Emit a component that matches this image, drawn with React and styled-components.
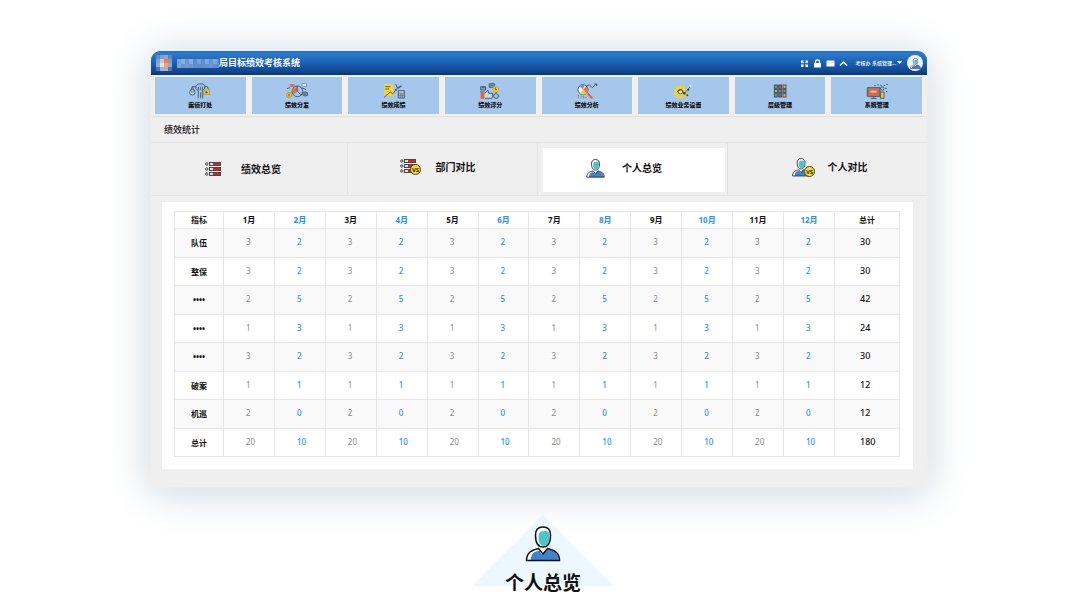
import React from "react";
import styled, { createGlobalStyle } from "styled-components";

const GlobalStyle = createGlobalStyle`
  * {
    box-sizing: border-box;
  }
  body {
    margin: 0;
    background: #fff;
    color: #111;
    font-family: "Noto Sans", "Noto Sans CJK SC", sans-serif;
  }
  button {
    border: 0;
    padding: 0;
    background: none;
    color: inherit;
    font-family: inherit;
  }
  svg {
    display: block;
  }
`;

const Page = styled.div`
  padding: 51px 140px 0 151px;
`;

const Window = styled.main`
  background: #efefef;
  border-radius: 9px 9px 11px 11px;
  overflow: hidden;
  box-shadow: 0 0 2px rgba(255, 250, 240, 0.9), 0 4px 40px 4px #d0dae1;
`;

const Header = styled.header`
  display: flex;
  align-items: center;
  height: 24px;
  padding: 0 4px 0 5px;
  background: linear-gradient(#1c6fd0 0, #2c7ad0 10%, #0e4791 85%, #06357a);
  color: #fff;
`;

const SystemTitle = styled.h1`
  flex: 1;
  margin: 0;
  font-size: 9px;
  line-height: 14px;
  font-weight: 700;
`;

const MaskWrap = styled.span`
  margin-left: 5px;
`;

const Tools = styled.div`
  display: flex;
  align-items: center;
  gap: 4px;
`;

const Tool = styled.button`
  width: 9px;
  height: 9px;
`;

const User = styled.button`
  display: flex;
  align-items: center;
  gap: 1px;
  margin: 0 1px 0 4px;
  font-size: 5px;
  line-height: 8px;
  font-weight: 500;
  white-space: nowrap;
`;

const Avatar = styled.div`
  display: flex;
  align-items: center;
  justify-content: center;
  width: 16px;
  height: 16px;
  border-radius: 50%;
  background: #eef3f7;
`;

const Modules = styled.nav`
  display: grid;
  grid-template-columns: repeat(8, 1fr);
  gap: 6px;
  padding: 2px 5px 2px 4px;
  background: #f0f0ef;
  border-bottom: 1px solid #dfdfdf;
`;

const Module = styled.button`
  display: flex;
  flex-direction: column;
  align-items: center;
  height: 37px;
  padding-top: 6px;
  background: #a5c7eb;
  box-shadow: 0 0 1px 1px #f5f3ef;
  font-size: 6px;
  line-height: 12px;
  font-weight: 900;
`;

const SectionTitle = styled.h2`
  margin: 0;
  padding: 6px 13px 5px;
  font-size: 9px;
  line-height: 14px;
  font-weight: 500;
`;

const Tabs = styled.div`
  display: grid;
  grid-template-columns: 197fr 190fr 190fr 199fr;
  height: 54px;
  border-top: 1px solid #e3e3e3;
  border-bottom: 1px solid #e3e3e3;
`;

const TabCell = styled.div`
  display: flex;
  padding: ${(p) => (p.$active ? "5px 2px 3px 5px" : "0")};
  border-right: 1px solid #e2e2e2;
  &:last-child {
    border-right: 0;
  }
`;

const Tab = styled.button`
  flex: 1;
  display: flex;
  align-items: center;
  justify-content: center;
  padding: ${(p) => p.$inset};
  background: ${(p) => (p.$active ? "#fff" : "transparent")};
  font-size: 10px;
  line-height: 15px;
  font-weight: 700;
`;

const TabIcon = styled.span`
  width: 36px;
`;

const Panel = styled.section`
  margin: 6px 14px 18px 11px;
  padding: 9px 13px 12px 12px;
  background: #fff;
`;

const Table = styled.table`
  width: 100%;
  table-layout: fixed;
  border-collapse: collapse;
  font-size: 8px;
  line-height: 12px;
`;

const LabelCol = styled.col`
  width: 49px;
`;

const TotalCol = styled.col`
  width: 65px;
`;

const HeadCell = styled.th`
  height: 17px;
  padding: 0;
  border: 1px solid #e6e6e6;
  color: ${(p) => (p.$even ? "#1e90ff" : "#111")};
  font-weight: 700;
`;

const Row = styled.tr`
  height: 28px;
  &:nth-child(odd) {
    height: 29px;
    background: #f9f9f9;
  }
`;

const RowLabel = styled.th`
  padding: 0;
  border: 1px solid #e6e6e6;
  font-weight: 700;
`;

const Cell = styled.td`
  padding: 0 0 2px 22px;
  border: 1px solid #e6e6e6;
  color: ${(p) => (p.$even ? "#1e90ff" : "#8a8a8a")};
  font-weight: ${(p) => (p.$even ? 500 : 400)};
`;

const TotalCell = styled.td`
  padding: 0 0 2px 25px;
  border: 1px solid #e6e6e6;
  font-size: 9px;
  font-weight: 500;
`;

const Caption = styled.div`
  position: relative;
  display: flex;
  flex-direction: column;
  align-items: center;
  gap: 8px;
  width: 142px;
  margin: 28px auto 0;
  padding-top: 11px;
  left: 4px;
  font-size: 19px;
  line-height: 26px;
  font-weight: 700;
  &::before {
    content: "";
    position: absolute;
    z-index: -1;
    inset: 0 0 auto;
    height: 71px;
    background: #ecf8fe;
    clip-path: polygon(50% 0, 100% 100%, 0 100%);
  }
`;

const mosaic = [
  ["#5d8cc4", "#7fa3cf", "#8da8cc", "#5b88c0"],
  ["#7ba1d0", "#d9c3ba", "#ee8244", "#7f9dc4"],
  ["#8fa9ca", "#e3e2e6", "#eba37a", "#93a8c4"],
  ["#4a76b1", "#a3b3cb", "#b3b0b9", "#5279af"],
];

const Emblem = () => (
  <svg width="16" height="18" viewBox="0 0 16 18" shapeRendering="crispEdges" aria-hidden="true">
    {mosaic.map((line, y) =>
      line.map((fill, x) => (
        <rect key={`${x}-${y}`} x={x * 4} y={y * 4 + 1} width="4" height="4" fill={fill} />
      ))
    )}
  </svg>
);

const masked = ["#8db0df", "#a3bfe4", "#7ea5d8", "#a3bfe4", "#6c98d2", "#8fb0dc", "#6f9ad2", "#9ab8df", "#7aa1d4", "#9ab8df", "#6c98d2"];

const MaskedName = () => (
  <svg width="42" height="9" viewBox="0 0 42 9" shapeRendering="crispEdges" aria-hidden="true">
    {masked.map((fill, i) => (
      <g key={i} fill={fill}>
        <rect x={i * 4} width="4" height="5" opacity=".8" />
        <rect x={i * 4} y="5" width="4" height="4" opacity={i % 2 ? 0.6 : 0.85} />
      </g>
    ))}
  </svg>
);

const PersonShape = () => (
  <>
    <path d="M2 34.500C2 27 5 24 13 22L17 28L21 22C29 24 33 27 33 34.500Z" fill="#fff" />
    <path d="M5 34C6 27 9 25 14 25L17 29L21 23C28 24 33 27 33 34Z" fill="#4083c8" />
    <path d="M1 34.500H34C34 27 30 24.500 22 22.500L17.500 28L13 22.500C5 24.500 1 27 1 34.500Z" fill="none" stroke="#111" strokeWidth="1.500" />
    <path d="M17.500 1C12.500 1 10 4 10 9C10 16 12.500 21 17.500 21C22.500 21 25 16 25 9C25 4 22.500 1 17.500 1Z" fill="#fff" stroke="#111" strokeWidth="1.500" />
    <path d="M19 5C24 5 24 7 24 10C24 17 22 20 18 20C14 19 13 16 13 11C13 8 14 5 19 5Z" fill="#4bc5c7" />
  </>
);

const Person = ({ size }) => (
  <svg width={size} height={size} viewBox="0 0 35 36" aria-hidden="true">
    <PersonShape />
  </svg>
);

const Versus = ({ x, y }) => (
  <g transform={`translate(${x} ${y})`}>
    <circle r="5" fill="#f8dc24" stroke="#444" strokeWidth="1" />
    <text textAnchor="middle" y="2" fontSize="6" fontWeight="700" fill="#222">
      VS
    </text>
  </g>
);

const ListShape = () => (
  <>
    {[1, 6, 11].map((y) => (
      <g key={y} stroke="#222" strokeWidth=".8">
        <circle cx="1.800" cy={y + 1} r="1.200" fill="#efefef" />
        <rect x="4.400" y={y - 0.4} width="11.200" height="2.800" fill="#ddd" />
        <rect x="8" y={y} width="7.200" height="2" fill="#d8201c" stroke="none" />
      </g>
    ))}
  </>
);

const ListIcon = () => (
  <svg width="16" height="14" viewBox="0 0 16 14" aria-hidden="true">
    <ListShape />
  </svg>
);

const ListVersusIcon = () => (
  <svg width="22" height="17" viewBox="0 0 22 17" aria-hidden="true">
    <ListShape />
    <Versus x={15.500} y={10.500} />
  </svg>
);

const PersonVersusIcon = () => (
  <svg width="24" height="20" viewBox="0 0 24 20" aria-hidden="true">
    <g transform="scale(.52)">
      <PersonShape />
    </g>
    <Versus x={17.500} y={13.500} />
  </svg>
);

const ModuleIcon = ({ children }) => (
  <svg width="22" height="16" viewBox="0 0 66 48" fill="none" stroke="#34495a" strokeWidth="2.500" aria-hidden="true">
    {children}
  </svg>
);

const modules = [
  {
    name: "案侦打处",
    icon: (
      <>
        <path d="M22 8L27 3H43L47 8V16L41 22V46M28 46V24L21 17V8M28 12V22M34 11V22M41 11V22M35 28V46M21 11H10L5 23M47 11H55L60 22M10 11L15 22" />
        <circle cx="10" cy="28" r="8" fill="#d7e3ed" />
        <path d="M46 20H60L63 34H43Z" fill="#f5ca26" stroke="#b59a36" />
        <path d="M52 24V31M49 28H56M6 27H14" />
      </>
    ),
  },
  {
    name: "绩效分发",
    icon: (
      <>
        <path d="M11 3H26V12H11Z" fill="#f06b4b" stroke="none" />
        <path d="M48 2H62V10H48Z" fill="#fff" stroke="#789" />
        <circle cx="34" cy="25" r="16" />
        <path d="M33 12V26L23 34C17 26 21 15 33 12Z" fill="#f26646" stroke="none" />
        <path d="M34 25L46 36M34 9V25M47 14L60 20M3 17L12 14" />
        <circle cx="9" cy="36" r="8" fill="#efc423" stroke="#b19836" />
        <ellipse cx="58" cy="33" rx="8" ry="6" fill="#8aa5bd" />
        <path d="M9 32V40M54 33H62" />
      </>
    ),
  },
  {
    name: "绩效成绩",
    icon: (
      <>
        <path d="M4 3H24L31 10V39H4Z" fill="#f8d52c" stroke="none" />
        <path d="M7 11H22M7 18H18M3 43L22 27L29 33L45 13M38 3L43 14L54 9M45 17L57 8M36 18L42 24" />
        <path d="M46 23H64V45H46Z" fill="#b9cbdc" />
        <path d="M46 31H64M52 31V45M58 31V45M46 38H64" strokeWidth="1.500" />
      </>
    ),
  },
  {
    name: "绩效评分",
    icon: (
      <>
        <path d="M5 11H20V21H5ZM31 2H46V13H31Z" fill="#8faecb" />
        <circle cx="50" cy="19" r="9" fill="#f8ce28" stroke="#c2a53c" />
        <path d="M49 13V20H54M9 14H17M34 7H43" />
        <path d="M17 31L27 22L29 31H41V39L38 46H18M3 27H17" fill="#c7d8e8" />
        <path d="M5 29H16V47H5Z" fill="#f3602f" stroke="none" />
        <circle cx="51" cy="39" r="7" fill="#b3cbe1" />
        <path d="M51 28V31M42 39H44M58 39H61M51 46V48" />
      </>
    ),
  },
  {
    name: "绩效分析",
    icon: (
      <>
        <circle cx="21" cy="20" r="15" fill="#eef4f8" />
        <path d="M21 20L11 9A15 15 0 0 1 25 6Z" fill="#7597b7" stroke="none" />
        <path d="M21 20L31 10A14 14 0 0 1 31 30Z" fill="#f36c44" stroke="none" />
        <path d="M21 20L31 30A14 14 0 0 1 12 31Z" fill="#f7cf2a" stroke="none" />
        <path d="M31 10L40 5L49 14L60 4M55 3H62V9" />
        <path d="M35 31L49 46" stroke="#ed5830" strokeWidth="6" />
        <path d="M7 36V46M15 40V46M23 38V46M30 42V46" strokeDasharray="3 2" />
      </>
    ),
  },
  {
    name: "绩效业务设置",
    icon: (
      <>
        <circle cx="25" cy="26" r="13" fill="#f9d422" stroke="#f9d422" strokeWidth="7" />
        <circle cx="25" cy="26" r="18" stroke="#f9d422" strokeWidth="5" strokeDasharray="6 5.300" />
        <circle cx="25" cy="26" r="7" fill="#d3e3f4" />
        <path d="M15 26L28 20L37 31L54 12" />
        <g fill="#34495a" stroke="none">
          <circle cx="37" cy="31" r="4" />
          <circle cx="46" cy="37" r="3" />
          <circle cx="49" cy="20" r="3" />
        </g>
        <circle cx="56" cy="8" r="3" fill="#e8eef3" stroke="#c9d6e2" />
      </>
    ),
  },
  {
    name: "层级管理",
    icon: (
      <>
        {[6, 19, 32].map((y, r) =>
          [16, 29, 42].map((x, c) => (
            <rect key={`${x}-${y}`} x={x} y={y} width="9" height="10" fill={["#58a3bd", "#d35245", "#d8bc45", "#62a17f"][(r * 2 + c) % 4]} stroke="#35404d" />
          ))
        )}
      </>
    ),
  },
  {
    name: "系统管理",
    icon: (
      <>
        <path d="M4 14H42V40H4Z" fill="#7791aa" />
        <path d="M7 17H39V36H7Z" fill="#f2602f" stroke="none" />
        <path d="M14 26H31" stroke="#ffd8c5" strokeWidth="5" />
        <path d="M14 46H32M23 40V46" />
        <path d="M44 27H54V46H44Z" fill="#f4cf38" />
        <circle cx="49" cy="17" r="5" />
        <path d="M25 8H29M34 6H38M44 5L46 10M53 10L56 6M61 4H65M58 16H62M60 26H64" strokeWidth="3" />
      </>
    ),
  },
];

const tabs = [
  { name: "绩效总览", icon: <ListIcon />, inset: "0 12px 0 0" },
  { name: "部门对比", icon: <ListVersusIcon />, inset: "0 10px 3px 0" },
  { name: "个人总览", icon: <Person size={19} />, inset: "0 20px 4px 0", active: true },
  { name: "个人对比", icon: <PersonVersusIcon />, inset: "0 0 3px 4px" },
];

const months = Array.from({ length: 12 }, (_, i) => i + 1);

const rows = [
  { label: "队伍", odd: 3, even: 2, total: 30 },
  { label: "整保", odd: 3, even: 2, total: 30 },
  { label: "••••", odd: 2, even: 5, total: 42 },
  { label: "••••", odd: 1, even: 3, total: 24 },
  { label: "••••", odd: 3, even: 2, total: 30 },
  { label: "破案", odd: 1, even: 1, total: 12 },
  { label: "机巡", odd: 2, even: 0, total: 12 },
  { label: "总计", odd: 20, even: 10, total: 180 },
];

const HeaderTools = () => (
  <Tools>
    <Tool aria-label="全屏">
      <svg width="9" height="9" viewBox="0 0 18 18" fill="#fff">
        <path d="M2 3H8L6 5L8 7L6 9L4 7L2 9ZM16 3V9L14 7L12 9L10 7L12 5L10 3ZM2 16V10L4 12L6 10L8 12L6 14L8 16ZM16 16H10L12 14L10 12L12 10L14 12L16 10Z" />
      </svg>
    </Tool>
    <Tool aria-label="锁定">
      <svg width="9" height="9" viewBox="0 0 18 18">
        <path d="M5 9V6C5 0 13 0 13 6V9" fill="none" stroke="#fff" strokeWidth="2.500" />
        <rect x="2" y="8" width="14" height="9" rx="1" fill="#fff" />
      </svg>
    </Tool>
    <Tool aria-label="消息">
      <svg width="9" height="9" viewBox="0 0 18 18">
        <rect x="1" y="3" width="16" height="12" rx="1" fill="#fff" />
        <path d="M2 5L9 9L16 5" fill="none" stroke="#a8c3e3" />
      </svg>
    </Tool>
    <Tool aria-label="收起">
      <svg width="9" height="9" viewBox="0 0 18 18">
        <path d="M2 13L9 6L16 13" fill="none" stroke="#fff" strokeWidth="3" />
      </svg>
    </Tool>
    <User>
      考核办 系统管理...
      <svg width="5" height="4" viewBox="0 0 5 4">
        <path d="M0 0H5L2.500 3Z" fill="#fff" />
      </svg>
    </User>
    <Avatar>
      <Person size={11} />
    </Avatar>
  </Tools>
);

const ScoreTable = () => (
  <Table>
    <colgroup>
      <LabelCol />
      {months.map((m) => (
        <col key={m} />
      ))}
      <TotalCol />
    </colgroup>
    <thead>
      <tr>
        <HeadCell scope="col">指标</HeadCell>
        {months.map((m) => (
          <HeadCell key={m} scope="col" $even={m % 2 === 0}>
            {m}月
          </HeadCell>
        ))}
        <HeadCell scope="col">总计</HeadCell>
      </tr>
    </thead>
    <tbody>
      {rows.map((row, i) => (
        <Row key={i}>
          <RowLabel scope="row">{row.label}</RowLabel>
          {months.map((m) => (
            <Cell key={m} $even={m % 2 === 0}>
              {m % 2 === 0 ? row.even : row.odd}
            </Cell>
          ))}
          <TotalCell>{row.total}</TotalCell>
        </Row>
      ))}
    </tbody>
  </Table>
);

const App = () => {
  return (
    <>
      <GlobalStyle />
      <Page>
        <Window>
          <Header>
            <Emblem />
            <MaskWrap>
              <MaskedName />
            </MaskWrap>
            <SystemTitle>局目标绩效考核系统</SystemTitle>
            <HeaderTools />
          </Header>
          <Modules>
            {modules.map((m) => (
              <Module key={m.name}>
                <ModuleIcon>{m.icon}</ModuleIcon>
                {m.name}
              </Module>
            ))}
          </Modules>
          <SectionTitle>绩效统计</SectionTitle>
          <Tabs>
            {tabs.map((t) => (
              <TabCell key={t.name} $active={t.active}>
                <Tab $active={t.active} $inset={t.inset}>
                  <TabIcon>{t.icon}</TabIcon>
                  {t.name}
                </Tab>
              </TabCell>
            ))}
          </Tabs>
          <Panel>
            <ScoreTable />
          </Panel>
        </Window>
        <Caption>
          <Person size={36} />
          <span>个人总览</span>
        </Caption>
      </Page>
    </>
  );
};

export default App;
